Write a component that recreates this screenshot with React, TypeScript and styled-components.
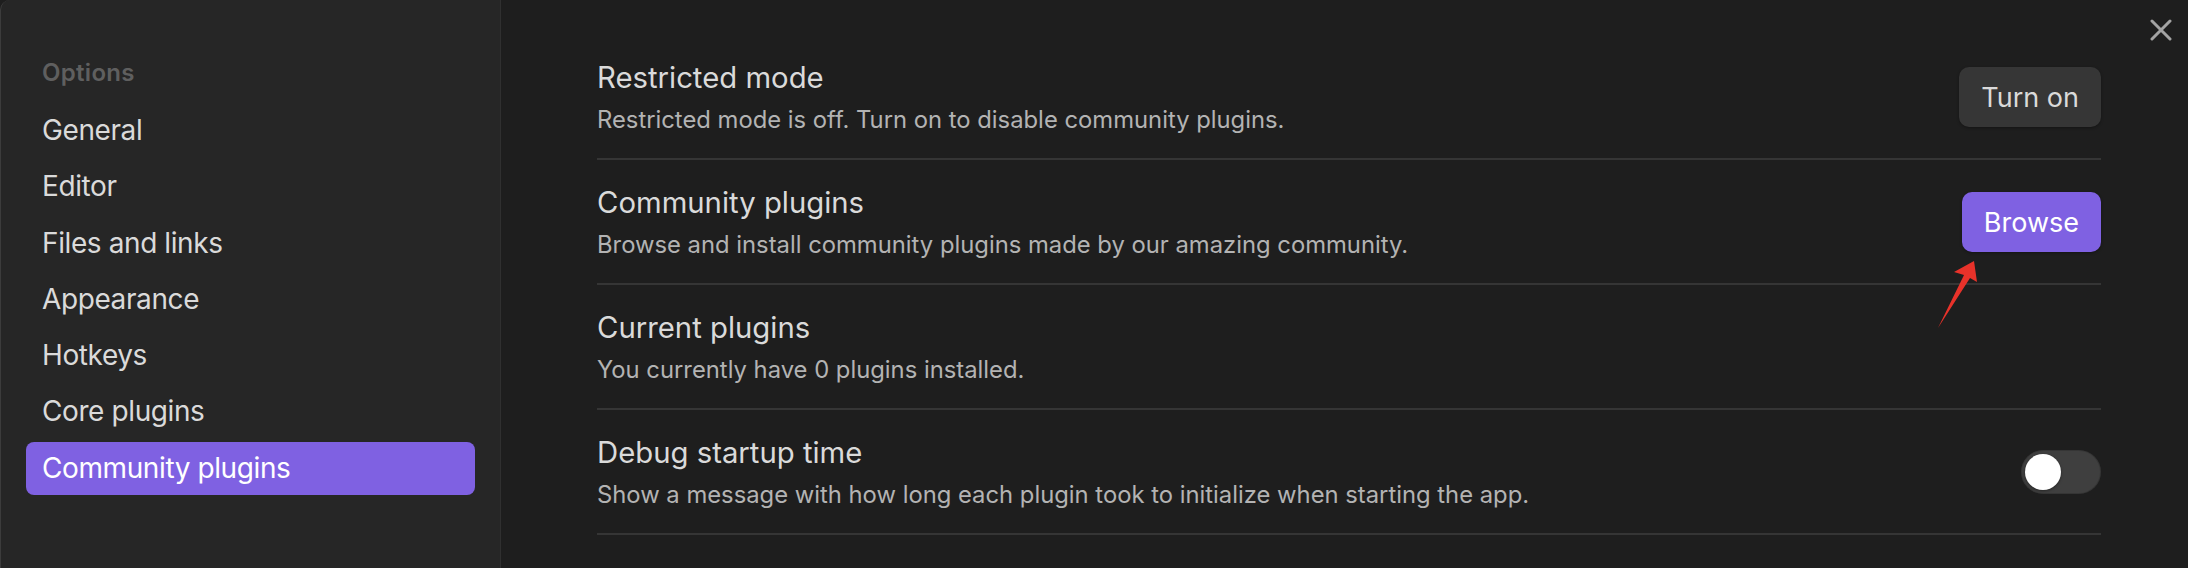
import styled, { createGlobalStyle } from 'styled-components';

const accent = '#7f61e2';
const border = '#353535';

const GlobalStyle = createGlobalStyle`
  html, body {
    margin: 0;
    padding: 0;
    background: #1e1e1e;
    overflow: hidden;
  }
  * {
    box-sizing: border-box;
  }
`;

const Modal = styled.div`
  position: relative;
  display: flex;
  width: 2188px;
  height: 568px;
  font-family: Inter, "Noto Sans", sans-serif;
  background: #1e1e1e;
`;

const Sidebar = styled.nav`
  width: 501px;
  flex: none;
  padding: 58px 25px 0 25px;
  background: #262626;
  border-right: 1px solid #303030;
  border-left: 1px solid #3c3c3c;
  border-top-left-radius: 10px;
`;

const SidebarHeading = styled.div`
  padding-left: 16px;
  font-size: 24px;
  line-height: 30px;
  font-weight: 600;
  letter-spacing: 0.3px;
  color: #5f5f5f;
  margin-bottom: 16px;
`;

const NavList = styled.div`
  display: flex;
  flex-direction: column;
  gap: 3.3px;
`;

const NavItem = styled.div<{ $active?: boolean }>`
  height: 53px;
  line-height: 53px;
  padding-left: 16px;
  border-radius: 8px;
  font-size: 28px;
  letter-spacing: -0.4px;
  color: ${p => (p.$active ? '#ffffff' : '#dadada')};
  background: ${p => (p.$active ? accent : 'transparent')};
`;

const Content = styled.main`
  flex: 1;
  padding: 35px 87px 0 96px;
`;

const SettingItem = styled.div`
  display: flex;
  align-items: center;
  justify-content: space-between;
  padding: 24px 0 23px 0;
  border-bottom: 2px solid ${border};
`;

const Info = styled.div`
  display: flex;
  flex-direction: column;
  gap: 8px;
`;

const Name = styled.div`
  font-size: 29.3px;
  line-height: 38px;
  color: #dadada;
`;

const Description = styled.div`
  font-size: 23.8px;
  line-height: 30px;
  color: #b3b3b3;
`;

const Button = styled.button<{ $primary?: boolean }>`
  height: 60px;
  padding: 0 22px;
  border: none;
  border-radius: 10px;
  font-family: inherit;
  font-size: 27px;
  color: ${p => (p.$primary ? '#ffffff' : '#dadada')};
  background: ${p => (p.$primary ? accent : '#363636')};
  box-shadow: 0 1px 3px rgba(0, 0, 0, 0.35);
`;

const Toggle = styled.div<{ $on?: boolean }>`
  position: relative;
  width: 80px;
  height: 44px;
  border-radius: 22px;
  background: ${p => (p.$on ? accent : '#3f3f3f')};
  box-shadow: inset 0 0 0 1px rgba(0, 0, 0, 0.15);

  &::after {
    content: '';
    position: absolute;
    top: 4px;
    left: ${p => (p.$on ? '40px' : '4px')};
    width: 36px;
    height: 36px;
    border-radius: 50%;
    background: #ffffff;
    box-shadow: 0 1px 3px rgba(0, 0, 0, 0.4);
  }
`;

const CloseButton = styled.div`
  position: absolute;
  top: 19px;
  left: 2150px;
  width: 22px;
  height: 22px;
`;

const Annotation = styled.svg`
  position: absolute;
  left: 1900px;
  top: 240px;
`;

const navItems = ['General', 'Editor', 'Files and links', 'Appearance', 'Hotkeys', 'Core plugins', 'Community plugins'];

export default function App() {
  return (
    <>
      <GlobalStyle />
      <Modal>
        <Sidebar>
          <SidebarHeading>Options</SidebarHeading>
          <NavList>
            {navItems.map(item => (
              <NavItem key={item} $active={item === 'Community plugins'}>{item}</NavItem>
            ))}
          </NavList>
        </Sidebar>
        <Content>
          <SettingItem>
            <Info>
              <Name>Restricted mode</Name>
              <Description>Restricted mode is off. Turn on to disable community plugins.</Description>
            </Info>
            <Button>Turn on</Button>
          </SettingItem>
          <SettingItem>
            <Info>
              <Name>Community plugins</Name>
              <Description>Browse and install community plugins made by our amazing community.</Description>
            </Info>
            <Button $primary>Browse</Button>
          </SettingItem>
          <SettingItem>
            <Info>
              <Name>Current plugins</Name>
              <Description>You currently have 0 plugins installed.</Description>
            </Info>
          </SettingItem>
          <SettingItem>
            <Info>
              <Name>Debug startup time</Name>
              <Description>Show a message with how long each plugin took to initialize when starting the app.</Description>
            </Info>
            <Toggle />
          </SettingItem>
        </Content>
        <CloseButton>
          <svg width="22" height="22" viewBox="0 0 22 22">
            <path d="M2 2 L20 20 M20 2 L2 20" stroke="#a3a3a3" strokeWidth="3" strokeLinecap="round" />
          </svg>
        </CloseButton>
        <Annotation width="120" height="100" viewBox="0 0 120 100">
          <polygon points="74,21 54,32 64,35 38,88 70,38 77,42" fill="#e8322a" />
        </Annotation>
      </Modal>
    </>
  );
}
